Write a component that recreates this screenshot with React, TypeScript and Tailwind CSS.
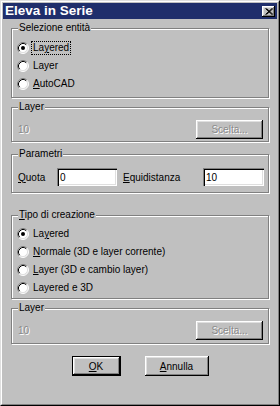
const font = 'font-["Liberation_Sans",Arial,sans-serif]'

const groupBox = 'relative border border-[#808080] shadow-[inset_1px_1px_0_#fff,1px_1px_0_#fff]'
const btnShadow =
  'shadow-[inset_-1px_-1px_0_#000,inset_1px_1px_0_#fff,inset_-2px_-2px_0_#808080,inset_2px_2px_0_#dfdfdf]'
const sunken =
  'shadow-[inset_1px_1px_0_#808080,inset_2px_2px_0_#000,inset_-1px_-1px_0_#fff,inset_-2px_-2px_0_#dfdfdf]'
const disabled = 'text-[#8a8a8a] [text-shadow:1px_1px_0_#fff]'

function Radio({ checked }: { checked?: boolean }) {
  return (
    <svg width="12" height="12" viewBox="0 0 12 12" className="shrink-0">
      <circle cx="6" cy="6" r="5" fill="#fff" />
      <path d="M2.11 9.89 A5.5 5.5 0 0 1 9.89 2.11" fill="none" stroke="#808080" strokeWidth="1" />
      <path d="M2.82 9.18 A4.5 4.5 0 0 1 9.18 2.82" fill="none" stroke="#000" strokeWidth="1" />
      <path d="M9.89 2.11 A5.5 5.5 0 0 1 2.11 9.89" fill="none" stroke="#fff" strokeWidth="1" />
      <path d="M9.18 2.82 A4.5 4.5 0 0 1 2.82 9.18" fill="none" stroke="#dfdfdf" strokeWidth="1" />
      {checked && <circle cx="6" cy="6" r="2" fill="#000" />}
    </svg>
  )
}

function GroupLabel({ children }: { children: React.ReactNode }) {
  return (
    <span className="absolute -top-[7px] left-[6px] bg-[#c0c0c0] px-[1px] leading-[12px] text-black">
      {children}
    </span>
  )
}

function RadioRow({ label, checked, focus }: { label: React.ReactNode; checked?: boolean; focus?: boolean }) {
  return (
    <div className="flex h-[18px] items-center gap-[3px]">
      <Radio checked={checked} />
      <span className={`px-[1px] leading-[12px] ${focus ? 'outline outline-1 outline-dotted outline-black' : ''}`}>
        {label}
      </span>
    </div>
  )
}

function LayerGroup({ height }: { height: string }) {
  return (
    <div className={`${groupBox} ${height} mt-[9px]`}>
      <GroupLabel>Layer</GroupLabel>
      <div className="flex items-center justify-between pl-[6px] pr-[5px] pt-[12px]">
        <span className={disabled}>10</span>
        <button className={`h-[19px] w-[67px] bg-[#c0c0c0] ${btnShadow} ${disabled}`}>Scelta...</button>
      </div>
    </div>
  )
}

export default function App() {
  return (
    <div className={`${font} h-[406px] w-[280px] border border-b-black border-l-[#dfdfdf] border-r-black border-t-[#dfdfdf] bg-[#c0c0c0] text-[10px] text-black`}>
      <div className="h-full border border-b-[#808080] border-l-white border-r-[#808080] border-t-white p-[1px]">
        {/* Title bar */}
        <div className="flex h-[16px] items-center justify-between bg-[#1f2e6b] pl-[2px] pr-[2px]">
          <span className="text-[13.5px] font-bold leading-none text-white">Eleva in Serie</span>
          <div className={`flex h-[11px] w-[13px] items-center justify-center bg-[#c0c0c0] ${btnShadow}`}>
            <svg width="8" height="7" viewBox="0 0 8 7">
              <path d="M0.5 0.5 L7 6.5 M1.5 0.5 L8 6.5 M7 0.5 L0.5 6.5 M8 0.5 L1.5 6.5" stroke="#000" strokeWidth="1" />
            </svg>
          </div>
        </div>

        <div className="px-[8px]">
          {/* Selezione entità */}
          <div className={`${groupBox} mt-[9px] h-[70px]`}>
            <GroupLabel>Selezione entità</GroupLabel>
            <div className="pl-[5px] pt-[10px]">
              <RadioRow label={<>La<u>y</u>ered</>} checked focus />
              <RadioRow label="Layer" />
              <RadioRow label={<><u>A</u>utoCAD</>} />
            </div>
          </div>

          <LayerGroup height="h-[35px]" />

          {/* Parametri */}
          <div className={`${groupBox} mt-[12px] h-[39px]`}>
            <GroupLabel>Parametri</GroupLabel>
            <div className="flex items-center pl-[6px] pt-[13px]">
              <span className="w-[39px]"><u>Q</u>uota</span>
              <div className={`flex h-[18px] w-[60px] items-center bg-white pl-[3px] ${sunken}`}>0</div>
              <span className="ml-[6px] w-[80px]"><u>E</u>quidistanza</span>
              <div className={`flex h-[18px] w-[61px] items-center bg-white pl-[3px] ${sunken}`}>10</div>
            </div>
          </div>

          {/* Tipo di creazione */}
          <div className={`${groupBox} mt-[22px] h-[84px]`}>
            <GroupLabel><u>T</u>ipo di creazione</GroupLabel>
            <div className="pl-[5px] pt-[9px]">
              <RadioRow label={<>La<u>y</u>ered</>} checked />
              <RadioRow label={<><u>N</u>ormale (3D e layer corrente)</>} />
              <RadioRow label={<><u>L</u>ayer (3D e cambio layer)</>} />
              <RadioRow label="Layered e 3D" />
            </div>
          </div>

          <div className="mt-[4px]">
            <LayerGroup height="h-[36px]" />
          </div>

          {/* Buttons */}
          <div className="mt-[12px] flex justify-center gap-[24px]">
            <button className={`h-[20px] w-[49px] border border-black bg-[#c0c0c0] ${btnShadow}`}>
              <u>O</u>K
            </button>
            <button className={`h-[20px] w-[64px] bg-[#c0c0c0] ${btnShadow}`}>
              <u>A</u>nnulla
            </button>
          </div>
        </div>
      </div>
    </div>
  )
}
